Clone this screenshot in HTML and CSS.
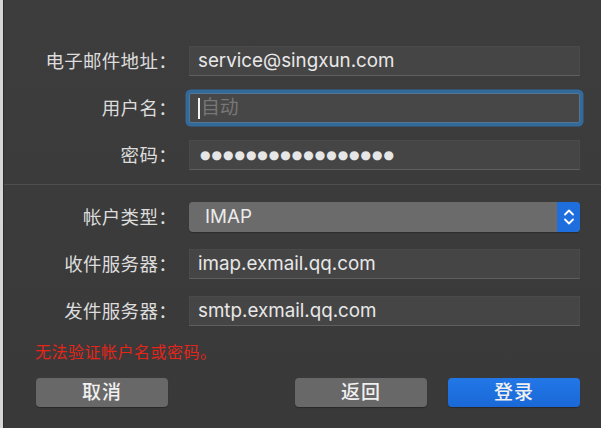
FILE: index.html
```html
<!DOCTYPE html>
<html lang="zh-CN">
<head>
	<meta charset="UTF-8">
	<title>添加帐户</title>
	<link rel="stylesheet" href="styles.css">
</head>
<body>
	<div id="sheet">
		<div class="inner">
			<div class="rows">
				<label class="label">电子邮件地址：</label>
				<div class="field">service@singxun.com</div>

				<label class="label">用户名：</label>
				<div class="field focus"><span class="caret"></span><span class="placeholder">自动</span></div>

				<label class="label">密码：</label>
				<div class="field dots">●●●●●●●●●●●●●●●●●</div>
			</div>

			<div class="sep"></div>

			<div class="rows">
				<label class="label">帐户类型：</label>
				<div class="select">
					<span class="value">IMAP</span>
					<span class="arrows">
						<svg width="12" height="20" viewBox="0 0 12 20"><path d="M2 7.5 L6 3.5 L10 7.5 M2 12.5 L6 16.5 L10 12.5" fill="none" stroke="#fff" stroke-width="1.8" stroke-linecap="round" stroke-linejoin="round"/></svg>
					</span>
				</div>

				<label class="label">收件服务器：</label>
				<div class="field">imap.exmail.qq.com</div>

				<label class="label">发件服务器：</label>
				<div class="field">smtp.exmail.qq.com</div>
			</div>

			<p class="error">无法验证帐户名或密码。</p>

			<div class="buttons">
				<div class="btn">取消</div>
				<div class="btn push">返回</div>
				<div class="btn primary">登录</div>
			</div>
		</div>
	</div>
</body>
</html>
```

FILE: styles.css
```css
* {margin: 0;padding: 0;box-sizing: border-box;}
html, body {height: 100%;}
body {background: #3b3b3b; font-family: "Inter", "Noto Sans CJK SC", sans-serif; color: #dedede; overflow: hidden;}

#sheet {height: 100%; border-left: 3px solid #d6d6d6; background: linear-gradient(#3d3d3d, #393939);}
.inner {height: 100%; border-left: 1px solid #2c2c2c; padding-top: 46px;}

.rows {display: grid; grid-template-columns: 173px 391px; column-gap: 12px; row-gap: 17px;}
.label {font-size: 18.5px; line-height: 30px; height: 30px; text-align: right; color: #dcdcdc; letter-spacing: 0.3px;}

.field {height: 30px; background: #454545; border: 1px solid #4a4a4a; border-bottom-color: #5f5f5f; padding: 0 8px; font-size: 18.8px; line-height: 28px; color: #e8e8e8; white-space: nowrap;}
.field.focus {border-color: #557591; background: #474747; box-shadow: 0 0 0 3.5px #336a9c; border-radius: 2px; display: flex; align-items: center;}
.caret {width: 2px; height: 21px; background: #f2f2f2; margin-right: 1px;}
.placeholder {color: #777;}
.dots {font-family: "DejaVu Sans", sans-serif; font-size: 12px; letter-spacing: 1px; color: #e6e6e6; padding-left: 10px; line-height: 28px;}

.sep {height: 1px; background: #4e4e4e; margin: 14px 0 17px;}

.select {height: 30px; display: flex; border-radius: 4px; overflow: hidden; background: #6b6b6b; box-shadow: 0 1px 1px rgba(0,0,0,0.25);}
.select .value {flex: 1; padding-left: 16px; font-size: 18.8px; line-height: 30px; color: #ececec;}
.select .arrows {width: 23px; background: #1e6ede; display: flex; align-items: center; justify-content: center;}

.error {margin: 16px 0 0 31px; font-size: 16px; line-height: 20px; color: #e3251a; letter-spacing: 0.5px;}

.buttons {display: flex; gap: 21px; margin: 16px 0 0 32px; width: 544px;}
.btn {width: 132px; height: 29px; border-radius: 4px; background: #686868; color: #f0f0f0; font-size: 19px; font-weight: 500; line-height: 29px; text-align: center; box-shadow: 0 1px 1px rgba(0,0,0,0.3); letter-spacing: 1px;}
.btn.push {margin-left: auto;}
.btn.primary {background: linear-gradient(#2277e6, #1a68d8);}
```
